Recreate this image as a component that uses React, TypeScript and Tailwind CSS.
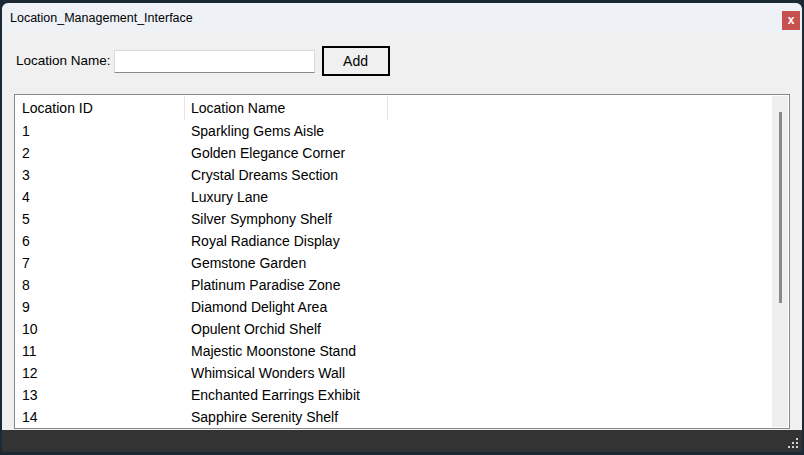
import React from 'react';

const locations = [
  'Sparkling Gems Aisle',
  'Golden Elegance Corner',
  'Crystal Dreams Section',
  'Luxury Lane',
  'Silver Symphony Shelf',
  'Royal Radiance Display',
  'Gemstone Garden',
  'Platinum Paradise Zone',
  'Diamond Delight Area',
  'Opulent Orchid Shelf',
  'Majestic Moonstone Stand',
  'Whimsical Wonders Wall',
  'Enchanted Earrings Exhibit',
  'Sapphire Serenity Shelf',
];

function ResizeGrip() {
  const dots = [
    [8, 0],
    [4, 4],
    [8, 4],
    [0, 8],
    [4, 8],
    [8, 8],
  ];
  return (
    <svg width="11" height="11" viewBox="0 0 11 11" aria-hidden="true">
      {dots.map(([x, y], i) => (
        <rect key={i} x={x} y={y} width="2" height="2" fill="#d0d0d0" />
      ))}
    </svg>
  );
}

export default function App() {
  return (
    <div
      className="w-[804px] h-[455px] bg-[#1b2935] pt-[3px] pb-[3px] px-[2px] overflow-hidden"
      style={{ fontFamily: '"Liberation Sans", Arial, sans-serif' }}
    >
      <div className="flex flex-col h-full rounded-t-[6px] overflow-hidden">
        {/* Title bar */}
        <div className="h-[30px] shrink-0 bg-[#eef2f7] flex items-center justify-between pl-[8px] pr-[2px]">
          <span className="text-[12.5px] text-black mt-[1px]">Location_Management_Interface</span>
          <div className="w-[18px] h-[19px] bg-[#c75050] flex items-center justify-center text-white text-[12px] font-bold leading-none mt-[4px]">
            x
          </div>
        </div>

        {/* Content */}
        <div className="flex-1 bg-[#f0f0f0] flex flex-col px-[12px] pt-[13px] pb-[1px]">
          <div className="flex items-center h-[30px] pl-[2px]">
            <label className="text-[13.5px] text-black">Location Name:</label>
            <input className="ml-[3px] w-[201px] h-[23px] bg-white border border-[#d9d9d9] border-b-[#8a8a8a] outline-none" />
            <button className="ml-[7px] w-[68px] h-[30px] border-2 border-black bg-[#f0f0f0] text-[14px] text-black">
              Add
            </button>
          </div>

          {/* Table */}
          <div className="mt-[18px] flex-1 border border-[#828790] bg-white flex overflow-hidden">
            <div className="flex-1 flex flex-col overflow-hidden pl-[1px] pt-[1px]">
              <div className="flex h-[24px] shrink-0 text-[14px] text-black">
                <div className="w-[169px] border-r border-[#e5e5e5] flex items-center pl-[6px]">Location ID</div>
                <div className="w-[203px] border-r border-[#e5e5e5] flex items-center pl-[6px]">Location Name</div>
              </div>
              {locations.map((name, i) => (
                <div key={i} className="flex h-[22px] shrink-0 items-center text-[14px] text-black">
                  <div className="w-[169px] pl-[6px]">{i + 1}</div>
                  <div className="w-[203px] pl-[6px]">{name}</div>
                </div>
              ))}
            </div>
            {/* Scrollbar */}
            <div className="w-[16px] bg-[#efefef] m-[1px] flex justify-center pt-[16px]">
              <div className="w-[3px] h-[191px] bg-[#8a8a8a]" />
            </div>
          </div>
        </div>

        {/* Bottom bar */}
        <div className="h-[22px] shrink-0 bg-[#333333] flex items-end justify-end pr-[3px] pb-[3px]">
          <ResizeGrip />
        </div>
      </div>
    </div>
  );
}
